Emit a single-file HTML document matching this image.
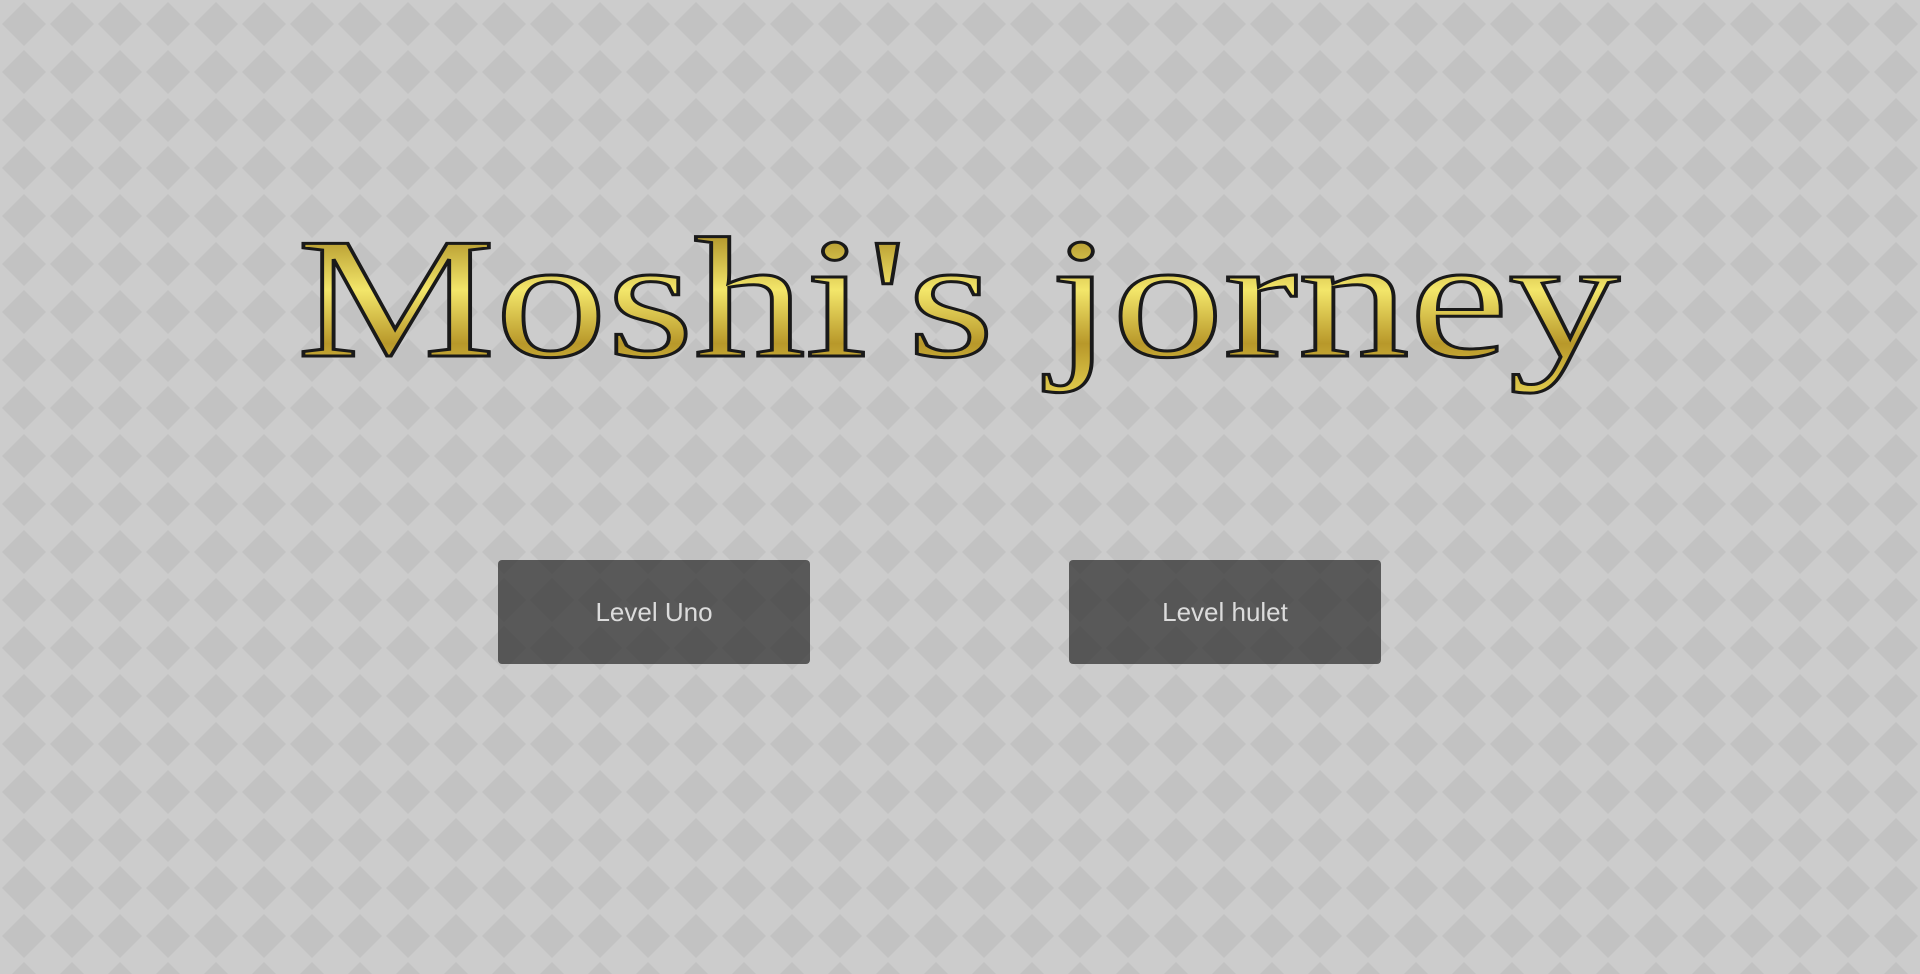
<!DOCTYPE html>
<html><head><meta charset="utf-8"><style>
html,body{margin:0;padding:0;width:1920px;height:974px;overflow:hidden;background:#cccccc;font-family:"Liberation Sans",sans-serif}
.btn{position:absolute;top:560px;width:312px;height:104px;background:rgba(40,40,40,0.7);border-radius:4px;color:#dcdcdc;font-size:26px;display:flex;align-items:center;justify-content:center}
svg.t{position:absolute;left:0;top:0}
</style></head><body>
<svg class="t" width="1920" height="974">
<defs>
<pattern id="p" width="48" height="48" patternUnits="userSpaceOnUse">
<polygon points="24,2 46,24 24,46 2,24" fill="#c2c2c2"/>
</pattern>
<linearGradient id="g" x1="0" y1="226" x2="0" y2="440" gradientUnits="userSpaceOnUse">
<stop offset="0" stop-color="#a88a22"/>
<stop offset="0.3" stop-color="#f3e66a"/>
<stop offset="0.55" stop-color="#b8982a"/>
<stop offset="0.8" stop-color="#e4d050"/>
<stop offset="1" stop-color="#a88a22"/>
</linearGradient>
</defs>
<rect width="1920" height="974" fill="url(#p)"/>
<text x="297" y="356" font-family="Liberation Serif,serif" font-size="172" textLength="1323" lengthAdjust="spacingAndGlyphs" fill="url(#g)" stroke="#1a1a1a" stroke-width="3">Moshi's jorney</text>
</svg>
<div class="btn" style="left:498px">Level Uno</div>
<div class="btn" style="left:1069px">Level hulet</div>
</body></html>
